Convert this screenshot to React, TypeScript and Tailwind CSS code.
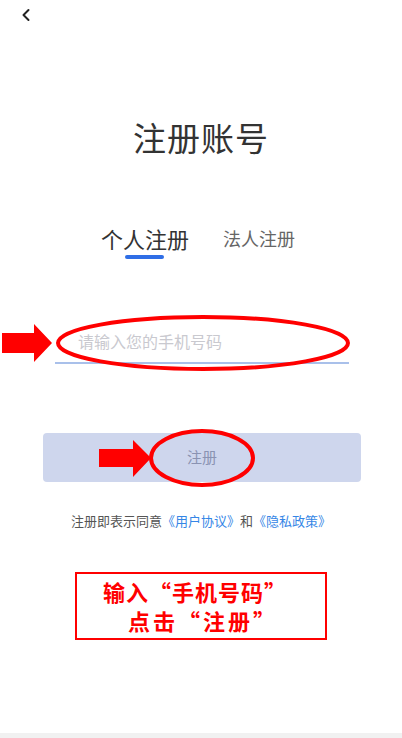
import { ChevronLeft } from "lucide-react";

const cjk = { fontFamily: '"Noto Sans CJK SC", "Noto Sans", sans-serif' };

function Annotations() {
  return (
    <svg
      className="absolute inset-0 pointer-events-none"
      width="402"
      height="738"
      viewBox="0 0 402 738"
    >
      {/* arrow to input */}
      <polygon points="2,333 34,333 34,324 52,343 34,362 34,353 2,353" fill="#ff0000" />
      <ellipse cx="203" cy="343" rx="145" ry="26" fill="none" stroke="#ff0000" strokeWidth="4" />

      {/* arrow to button */}
      <polygon points="99,449 133,449 133,440 151,458 133,477 133,467 99,467" fill="#ff0000" />
      <ellipse cx="202" cy="458" rx="51" ry="27" fill="none" stroke="#ff0000" strokeWidth="4" />
    </svg>
  );
}

export default function App() {
  return (
    <div className="relative w-full h-[738px] bg-white flex flex-col overflow-hidden" style={cjk}>
      {/* Header */}
      <div className="h-[32px] pl-[16px] pt-[5px]">
        <ChevronLeft size={20} strokeWidth={2.4} className="text-[#222]" />
      </div>

      {/* Title */}
      <h1 className="mt-[85px] text-center text-[33px] leading-[40px] text-[#333] font-normal tracking-[1px]">
        注册账号
      </h1>

      {/* Tabs */}
      <div className="mt-[66px] flex items-start justify-center gap-[34px] pr-[6px]">
        <div className="flex flex-col items-center">
          <span className="text-[22px] leading-[30px] text-[#333]">个人注册</span>
          <div className="mt-[2px] h-[4px] w-[39px] rounded-full bg-[#2f6ee6]" />
        </div>
        <span className="text-[18px] leading-[30px] text-[#666]">法人注册</span>
      </div>

      {/* Phone input */}
      <div className="mt-[61px] ml-[55px] w-[294px] h-[44px] border-b-2 border-[#a9c0ea] flex items-center pl-[23px]">
        <input
          className="w-full bg-transparent outline-none text-[16px] placeholder:text-[#c9c9cf]"
          placeholder="请输入您的手机号码"
        />
      </div>

      {/* Register button */}
      <button className="mt-[69px] ml-[43px] w-[318px] h-[49px] rounded-[4px] bg-[#ced6ed] text-[15px] text-[#8a93b2]">
        注册
      </button>

      {/* Agreement */}
      <p className="mt-[29px] text-center text-[13px] leading-[20px] text-[#555]">
        注册即表示同意<span className="text-[#3586e6]">《用户协议》</span>和<span className="text-[#3586e6]">《隐私政策》</span>
      </p>

      {/* Instruction note */}
      <div className="mt-[41px] mx-auto w-[252px] h-[68px] border-2 border-[#ff0000] flex flex-col items-center justify-center text-[#ff0000] font-bold text-[22px] leading-[29px] tracking-[1px]">
        <span className="pr-[12px]">输入“手机号码”</span>
        <span className="pl-[4px] tracking-[3px]">点击“注册”</span>
      </div>

      <div className="mt-auto h-[5px] bg-[#f1f1f1]" />

      <Annotations />
    </div>
  );
}
